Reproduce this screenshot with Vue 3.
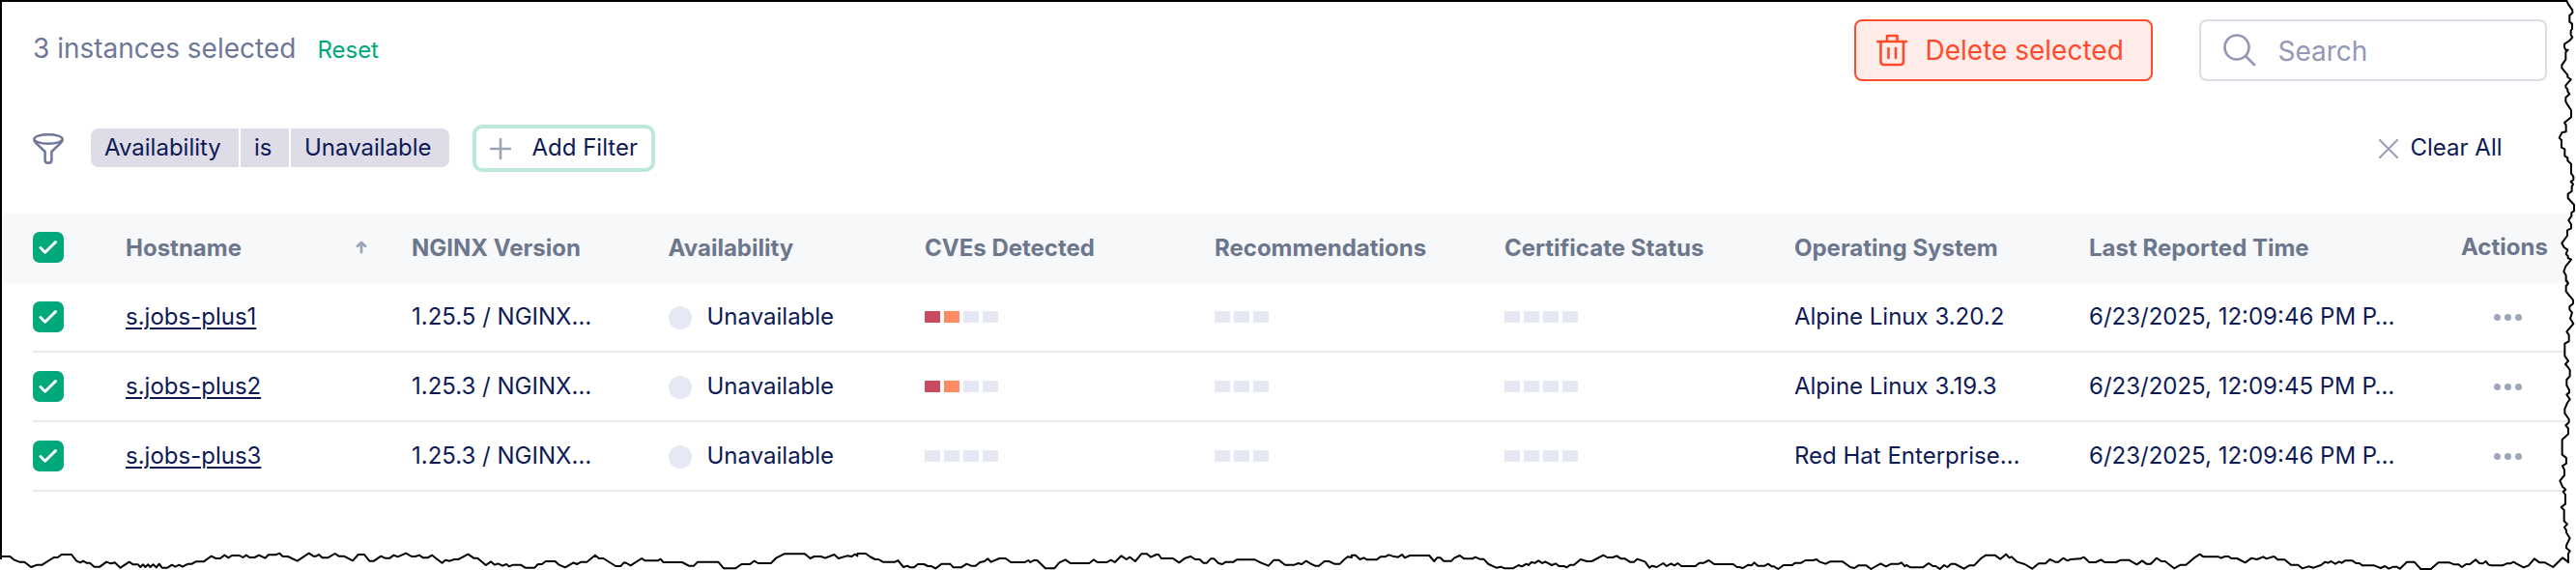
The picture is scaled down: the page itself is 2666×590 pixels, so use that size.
<script setup>
const columns = ['NGINX Version', 'Availability', 'CVEs Detected', 'Recommendations', 'Certificate Status', 'Operating System', 'Last Reported Time']
const rows = [
  { host: 's.jobs-plus1', version: '1.25.5 / NGINX…', cves: ['critical', 'high', '', ''], os: 'Alpine Linux 3.20.2', time: '6/23/2025, 12:09:46 PM P…' },
  { host: 's.jobs-plus2', version: '1.25.3 / NGINX…', cves: ['critical', 'high', '', ''], os: 'Alpine Linux 3.19.3', time: '6/23/2025, 12:09:45 PM P…' },
  { host: 's.jobs-plus3', version: '1.25.3 / NGINX…', cves: ['', '', '', ''], os: 'Red Hat Enterprise…', time: '6/23/2025, 12:09:46 PM P…' }
]
</script>

<template>
  <div class="page">
    <header class="toolbar">
      <span class="count">3 instances selected</span>
      <a class="reset">Reset</a>
      <button class="delete">
        <svg width="32" height="34" viewBox="0 0 32 34" fill="none" stroke="currentColor" stroke-width="2.6" stroke-linejoin="round" stroke-linecap="round">
          <path d="M1 8H31M11 8V2H21.5V8M4.500 8V28.500Q4.500 32 8 32H24.500Q28 32 28 28.500V8M12.500 15V25M20 15V25" />
        </svg>
        <span>Delete selected</span>
      </button>
      <div class="search">
        <svg width="34" height="34" viewBox="0 0 34 34" fill="none" stroke="currentColor" stroke-width="2.7" stroke-linecap="round">
          <circle cx="14" cy="14" r="12.5" /><path d="M23 23L32 32" />
        </svg>
        <span>Search</span>
      </div>
    </header>

    <div class="filters">
      <svg class="funnel" width="32" height="32" viewBox="0 0 32 32" fill="none" stroke="currentColor" stroke-width="2.5" stroke-linejoin="round">
        <ellipse cx="16" cy="6" rx="14.700" ry="4.700" />
        <path d="M1.300 7Q1.800 8.800 3.500 10.400L12.600 19V28Q12.600 30.700 16 30.700Q19.400 30.700 19.400 28V19L28.500 10.400Q30.200 8.800 30.700 7" />
      </svg>
      <div class="chip">
        <span class="c1">Availability</span><span class="c2">is</span><span class="c3">Unavailable</span>
      </div>
      <button class="add">
        <svg width="22" height="22" viewBox="0 0 22 22" stroke="#9aa4b8" stroke-width="2.600" stroke-linecap="round"><path d="M1 11H21M11 1V21" /></svg>
        <span>Add Filter</span>
      </button>
      <div class="clear">
        <svg width="20" height="20" viewBox="0 0 20 20" stroke="#9aa4b8" stroke-width="2.200" stroke-linecap="round"><path d="M1 1L19 19M19 1L1 19" /></svg>
        <span>Clear All</span>
      </div>
    </div>

    <div class="head">
      <div class="grid">
        <span class="check"><svg width="20" height="16" viewBox="0 0 20 16"><path d="M2 8.500L6.700 13.200L17.500 2.500" /></svg></span>
        <span class="hostname"><span class="label">Hostname</span>
          <svg width="12" height="14" viewBox="0 0 12 14" fill="none" stroke="#9aa4b8" stroke-width="2.800" stroke-linecap="round" stroke-linejoin="round"><path d="M6 12V3M2 5.800L6 2L10 5.800" /></svg>
        </span>
        <span v-for="c in columns" :key="c" class="label">{{ c }}</span>
        <span class="actions">Actions</span>
      </div>
    </div>
    <div v-for="r in rows" :key="r.host" class="row grid">
      <span class="check"><svg width="20" height="16" viewBox="0 0 20 16"><path d="M2 8.500L6.700 13.200L17.500 2.500" /></svg></span>
      <a class="host">{{ r.host }}</a>
      <span>{{ r.version }}</span>
      <span class="status"><i></i>Unavailable</span>
      <span class="bars"><i v-for="(b, n) in r.cves" :key="n" :class="b"></i></span>
      <span class="bars"><i v-for="n in 3" :key="n"></i></span>
      <span class="bars"><i v-for="n in 4" :key="n"></i></span>
      <span>{{ r.os }}</span>
      <span>{{ r.time }}</span>
      <span class="dots"><i></i><i></i><i></i></span>
    </div>

    <!-- Torn paper outline -->
    <svg class="tear" width="2666" height="590" viewBox="0 0 2666 590">
      <g transform="translate(2600 0) scale(.33333)">
        <path class="mask" d="M168 0L174 13L187 32V40L178 48V68L186 74V90L182 95V108L187 116L178 126L162 137V147L166 155H173L166 162V185L154 202V211L172 233V239L182 247L166 265V271L172 277V284L178 292L166 303V315L172 326L183 342V364L162 381L167 388V409L154 412L146 428L153 435V458L163 463V484L172 490V499L183 509V539L190 548V558L182 564L189 572L185 579V594L173 602V615L192 636V655L184 660V671L175 684L183 697V709L171 715V732L154 755L161 768L172 776L167 789L173 795V801L183 806L166 827L160 843L167 856V872L175 880L168 890V900H200V0Z" />
        <path d="M168 0L174 13L187 32V40L178 48V68L186 74V90L182 95V108L187 116L178 126L162 137V147L166 155H173L166 162V185L154 202V211L172 233V239L182 247L166 265V271L172 277V284L178 292L166 303V315L172 326L183 342V364L162 381L167 388V409L154 412L146 428L153 435V458L163 463V484L172 490V499L183 509V539L190 548V558L182 564L189 572L185 579V594L173 602V615L192 636V655L184 660V671L175 684L183 697V709L171 715V732L154 755L161 768L172 776L167 789L173 795V801L183 806L166 827L160 843L167 856V872L175 880L168 890V900" />
      </g>
      <g transform="translate(2600 290) scale(.33333)">
        <path class="mask" d="M168 0L174 10L167 18V35L176 46L189 62V73L178 82V91L186 101L180 119L190 135L169 160L176 170V190L163 197V235L174 251L165 261L173 270L179 279V298L169 309V326L177 341V349L169 355L179 370L171 381L163 400V413L176 432V442L166 451L174 460V478L155 495V542L168 552V569L156 577L162 589V606L148 623L156 641L166 650L158 657L165 666V695L152 705L161 714V748L171 758L162 767L168 777V784L179 801L168 824V832L179 841L174 849V878H200V0Z" />
        <path d="M168 0L174 10L167 18V35L176 46L189 62V73L178 82V91L186 101L180 119L190 135L169 160L176 170V190L163 197V235L174 251L165 261L173 270L179 279V298L169 309V326L177 341V349L169 355L179 370L171 381L163 400V413L176 432V442L166 451L174 460V478L155 495V542L168 552V569L156 577L162 589V606L148 623L156 641L166 650L158 657L165 666V695L152 705L161 714V748L171 758L162 767L168 777V784L179 801L168 824V832L179 841L174 849V878" />
      </g>
      <g transform="translate(0 540) scale(.574 .33333)">
        <path d="M0 108H18L25 118L35 125H44L56 141L67 134H76L97 111H104L111 102H129L138 122L145 127L150 122L156 128H162L170 140H180L192 125L200 130L207 127L217 143L233 125L240 133H249L253 141L258 133L262 141L267 133L271 141L276 133L282 142L287 131L292 143H302L310 134L316 140L323 134L329 140L339 131H346L353 124H367L381 107L389 114H397L405 104L412 112L418 105H432L438 111L444 104L450 111H459L467 104L478 113L484 103H497L504 98L510 108H519L536 122L557 98L565 107H570L575 102L581 112H591L604 99L611 107H620L636 121L646 102H657L666 122H674L687 107L694 113H703L710 104L717 109L732 98L742 108H749L756 104L763 112H771L779 104L797 128L803 119L811 122L819 117H826L835 109L844 101L854 113H861L876 135L885 124L892 134L898 130L906 137L913 132L918 139L925 134H939L947 143H964L970 132H977L984 123H1001L1008 134L1019 142L1034 127L1040 132L1048 125H1058L1073 104L1080 114H1088L1110 138H1119L1125 127L1130 129L1137 136L1157 114L1163 121H1186L1191 116L1196 126H1230L1242 137H1251L1258 125H1295L1305 145H1326L1337 132H1352L1360 122L1367 129H1390L1400 112L1414 100H1451L1461 114L1468 108H1480L1488 113L1504 102L1512 114L1527 106L1536 108L1541 101L1546 106V99H1561L1568 108" />
      </g>
      <g transform="translate(900 540) scale(.574 .33333)">
        <path d="M0 108L10 117H16L24 125H46L51 120L61 141L68 137L73 142H80L87 132H98L105 138H111L119 145L130 131H145L151 142H165L175 131L183 137H191L199 126L207 123L213 115L219 125L234 114H245L255 126H280L286 120L290 126L296 120H302L317 145H333L342 127L353 118L362 129H396L404 118L411 126H428L435 119L442 126L454 106L463 117L469 110L479 123L490 100H500L507 110L517 102H521L526 114H547L558 127L569 113L579 108L587 117H595L602 128H608L615 115H621L629 129L636 132L642 125H656L662 118H695L705 127L719 137L729 119H738L749 134H766L773 129L779 132L787 122L795 130L803 137H810L820 123H828L838 131H848L856 117L862 109L869 111V104H876L884 117L891 112L897 118H914L921 109H929L936 103L943 107L953 110L960 102L965 112L974 105H1009L1018 123L1023 112H1029L1035 122H1049L1054 113L1064 105L1072 115H1087L1092 110L1100 116H1107L1116 132L1130 143L1138 140L1145 145H1160L1170 135L1176 139L1184 131L1188 135L1193 126L1200 128L1206 121L1213 129L1218 124L1230 135L1237 130L1243 138H1252L1257 142L1263 134H1270L1282 117L1293 123H1302L1323 104L1330 111H1340L1347 106L1355 115H1362L1371 125H1378L1384 116L1398 124L1406 143L1411 137L1419 141L1431 129L1437 138L1445 130L1451 136L1457 129L1464 138H1489L1496 128H1504L1513 120L1523 132H1557L1564 141H1568" />
      </g>
      <g transform="translate(1800 540) scale(.5523 .33333)">
        <path d="M0 141L7 144L17 134L23 136L28 127L35 137H48L54 131L61 139H65L73 147L83 135H99L105 128H116L124 120H138L145 117L151 125L162 131L170 124H194L208 141L216 144L223 136H238L247 147L265 130L275 139L285 131H299L304 127L310 138L314 135L321 142H344L355 129L363 138H368L376 147L384 135L390 141L397 131H404L412 138L421 146L431 136H440L453 114L462 104H479L489 116L500 101L506 112L510 109L521 125L535 132L549 146L561 130H574L582 117L592 125H598L607 113L615 121L621 117L639 115L646 110L656 126H668L678 118L685 126H706L715 119H730L745 133L755 121L763 131H771L782 113L791 123H798L815 145L827 134H837L852 113L863 101L870 109H898L903 113L910 108H917L922 114H933L948 127L960 113L970 117L982 109L988 115L999 109H1003L1009 118H1022L1034 134H1047L1055 145L1067 139L1076 143L1090 135L1098 125L1103 128L1109 123L1117 131L1124 124L1129 128L1135 121H1149L1156 129H1162L1168 136H1190L1202 144L1210 138L1217 146L1226 140H1232L1238 146L1251 125H1265L1277 147H1296L1310 127H1331L1340 133H1348L1354 141L1362 132H1369L1380 118L1387 129L1393 130L1399 123L1404 133L1409 136H1430L1438 130H1445L1451 125L1457 131L1470 142L1479 136L1490 115L1500 127H1510L1525 141L1543 112L1555 127" />
      </g>
    </svg>
  </div>
</template>

<style>
body { margin: 0; background: #fff; overflow: hidden; }
</style>

<style scoped>
.page { position: relative; width: 2666px; height: 590px; overflow: hidden; background: #fff; box-sizing: border-box; font: 24px/30px Inter, "Liberation Sans", sans-serif; color: #0e1a56; }
.page::before { content: ""; position: absolute; left: 0; top: 0; width: 2655px; height: 577px; border: solid #000; border-width: 2px 0 0 2px; z-index: 2; pointer-events: none; }
button { font: inherit; margin: 0; box-sizing: border-box; }
svg { display: block; flex: none; }
.toolbar { display: flex; height: 104px; padding: 20px 30px 0 34px; box-sizing: border-box; align-items: flex-start; }
.count { font-size: 28px; line-height: 34px; margin-top: 13px; color: #6f7799; }
.reset { color: #00a97b; margin: 17px 0 0 22px; }
.delete { margin-left: auto; width: 309px; height: 64px; border: 2px solid #ff4b2b; border-radius: 8px; background: #ffece8; color: #ff4b2b; display: flex; align-items: center; padding: 0 0 0 21px; font-size: 28px; }
.delete span { margin-left: 18.5px; }
.search { margin-left: 48px; width: 360px; height: 64px; box-sizing: border-box; border: 2px solid #dadde6; border-radius: 8px; display: flex; align-items: center; padding-left: 23px; color: #9298b5; font-size: 28px; }
.search span { margin: 2px 0 0 22.5px; }
.filters { display: flex; align-items: center; height: 98px; padding-left: 34px; }
.funnel { color: #6f7799; margin-top: 2px; }
.chip { display: flex; gap: 2px; margin-left: 28px; height: 40px; line-height: 39px; border-radius: 8px; overflow: hidden; }
.chip span { background: #dddce7; padding-left: 14px; box-sizing: border-box; }
.c1 { width: 153px; } .c2 { width: 50px; } .c3 { width: 164px; }
.add { margin-left: 24px; width: 189px; height: 49px; border: 4px solid #bde9dd; border-radius: 10px; background: #fff; padding: 0 0 0 14px; color: inherit; display: flex; align-items: center; }
.add span { margin: -1px 0 0 21.5px; }
.add svg { margin-top: 2px; }
.clear { margin-left: auto; margin-right: 76.5px; display: flex; align-items: center; }
.clear svg { margin: 2px 12.5px 0 0; }
.head { margin-top: 19px; height: 72px; padding-bottom: 2px; box-sizing: border-box; background: #f7f8fa; color: #6c778d; font-weight: 650; }
.grid { display: grid; grid-template-columns: 96px 296px 265.5px 265.5px 300px 300px 300px 305px 385px 94px; height: 70px; align-items: center; margin-left: 34px; white-space: nowrap; }
.row { border-bottom: 2px solid #e8e8ee; }
.check { width: 32px; height: 32px; background: #00a97b; border-radius: 7px; display: flex; align-items: center; justify-content: center; }
.check path { fill: none; stroke: #fff; stroke-width: 3; stroke-linecap: round; stroke-linejoin: round; }
.hostname { display: flex; justify-content: space-between; align-items: center; padding-right: 46px; }
.label { padding-top: 2px; }
.host { text-decoration: underline; text-underline-offset: 3px; text-decoration-thickness: 2px; }
.status { display: flex; align-items: center; margin-top: -1px; }
.status i { width: 24px; height: 24px; border-radius: 50%; background: #e6e9f3; margin-right: 16px; position: relative; top: 1px; }
.bars { display: flex; gap: 4px; }
.bars i { width: 16px; height: 12px; background: #e6e9f3; }
.bars .critical { background: #cd4a5e; }
.bars .high { background: #ff8b62; }
.dots { display: flex; gap: 4px; padding-left: 34px; }
.dots i { width: 7px; height: 7px; border-radius: 50%; background: #9da7b9; }
.tear { position: absolute; left: 0; top: 0; z-index: 3; pointer-events: none; }
.tear path { fill: none; stroke: #000; stroke-width: 2; vector-effect: non-scaling-stroke; stroke-linejoin: round; }
.tear .mask { fill: #fff; stroke: none; }
</style>
